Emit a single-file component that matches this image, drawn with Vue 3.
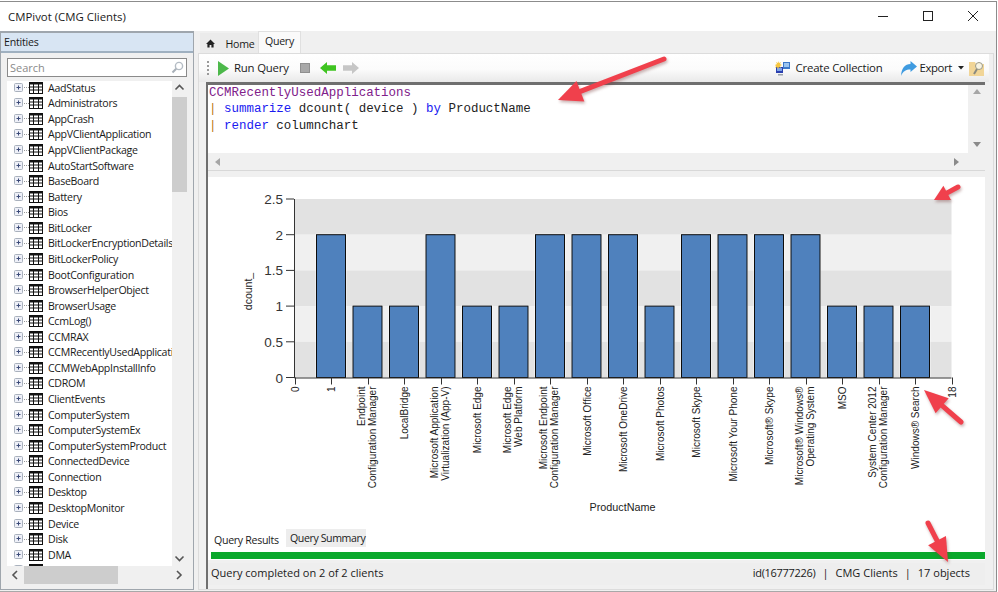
<script setup>
const entities = ['AadStatus','Administrators','AppCrash','AppVClientApplication','AppVClientPackage','AutoStartSoftware','BaseBoard','Battery','Bios','BitLocker','BitLockerEncryptionDetails','BitLockerPolicy','BootConfiguration','BrowserHelperObject','BrowserUsage','CcmLog()','CCMRAX','CCMRecentlyUsedApplications','CCMWebAppInstallInfo','CDROM','ClientEvents','ComputerSystem','ComputerSystemEx','ComputerSystemProduct','ConnectedDevice','Connection','Desktop','DesktopMonitor','Device','Disk','DMA','DMAChannel']

const x0 = 294.5, step = 36.5, yBase = 378, yUnit = 71.4
const products = [
  { v: 2, l: ['1'] },
  { v: 1, l: ['Endpoint', 'Configuration Manager'] },
  { v: 1, l: ['LocalBridge'] },
  { v: 2, l: ['Microsoft Application', 'Virtualization (App-V)'] },
  { v: 1, l: ['Microsoft Edge'] },
  { v: 1, l: ['Microsoft Edge', 'Web Platform'] },
  { v: 2, l: ['Microsoft Endpoint', 'Configuration Manager'] },
  { v: 2, l: ['Microsoft Office'] },
  { v: 2, l: ['Microsoft OneDrive'] },
  { v: 1, l: ['Microsoft Photos'] },
  { v: 2, l: ['Microsoft Skype'] },
  { v: 2, l: ['Microsoft Your Phone'] },
  { v: 2, l: ['Microsoft® Skype'] },
  { v: 2, l: ['Microsoft® Windows®', 'Operating System'] },
  { v: 1, l: ['MSO'] },
  { v: 1, l: ['System Center 2012', 'Configuration Manager'] },
  { v: 1, l: ['Windows® Search'] }
]
const bars = products.map((p, i) => {
  const cx = x0 + step * (i + 1)
  return {
    cx,
    x: cx - 14.5,
    y: yBase - p.v * yUnit,
    h: p.v * yUnit,
    lines: p.l.map((t, k) => ({
      t,
      bx: p.l.length === 1 ? cx + 4 : cx - 3 + k * 11
    }))
  }
})
const bands = [0, 1, 2, 3, 4].map(i => ({ y: 199.5 + i * 35.7, fill: i % 2 ? '#f0f0f0' : '#e2e2e2' }))
const yTicks = [
  { t: '2.5', y: 199.5 }, { t: '2', y: 235.2 }, { t: '1.5', y: 270.9 },
  { t: '1', y: 306.6 }, { t: '0.5', y: 342.3 }, { t: '0', y: 378 }
]
const xTicks = Array.from({ length: 19 }, (_, i) => x0 + i * step)

const arrows = [
  [664, 59, 558, 100, 24, 11],
  [958, 187, 934, 200, 15, 8],
  [961, 422, 924, 390, 24, 10],
  [928, 523, 948, 562, 24, 10]
].map(([x1, y1, x2, y2, hl, hw]) => {
  const d = Math.hypot(x2 - x1, y2 - y1)
  const ux = (x2 - x1) / d, uy = (y2 - y1) / d
  const bx = x2 - ux * hl, by = y2 - uy * hl
  return {
    x1, y1, x2: bx, y2: by,
    head: `${x2},${y2} ${bx - uy * hw},${by + ux * hw} ${bx + uy * hw},${by - ux * hw}`
  }
})
</script>

<template>
  <div class="window">
    <header class="titlebar">
      <span class="title">CMPivot (CMG Clients)</span>
      <div class="controls">
        <svg width="12" height="12" viewBox="0 0 12 12"><path d="M1 6.5h10" stroke="#222" stroke-width="1" /></svg>
        <svg width="12" height="12" viewBox="0 0 12 12"><rect x="1.5" y="1.5" width="9" height="9" fill="none" stroke="#222" stroke-width="1" /></svg>
        <svg width="12" height="12" viewBox="0 0 12 12"><path d="M1 1l10 10M11 1L1 11" stroke="#222" stroke-width="1" /></svg>
      </div>
    </header>

    <main class="body">
      <aside class="left">
        <div class="left-head">Entities</div>
        <div class="search">
          <span>Search</span>
          <svg width="13" height="13" viewBox="0 0 13 13"><circle cx="8" cy="5" r="3.6" fill="#fff" stroke="#b4bcc4" stroke-width="1.4" /><path d="M5.2 7.8L1.5 11.5" stroke="#a8b0b8" stroke-width="2" /></svg>
        </div>
        <div class="tree-wrap">
          <div class="tree-main">
            <ul class="tree">
              <li v-for="e in entities" :key="e" class="row">
                <svg class="exp" width="10" height="10" viewBox="0 0 10 10"><rect x=".5" y=".5" width="8" height="8" rx="1" fill="#eef0f8" stroke="#a9b1bd" /><path d="M2.5 4.5h4M4.5 2.5v4" stroke="#3b4a78" /></svg>
                <span class="dots"></span>
                <svg class="tbl" width="14" height="12" viewBox="0 0 14 12"><rect x=".5" y=".5" width="13" height="11" fill="#fff" stroke="#111" /><path d="M0 1.5h14" stroke="#111" stroke-width="2" /><path d="M0 5h14M0 8h14M4.5 0v12M9.5 0v12" stroke="#111" /></svg>
                <span class="name">{{ e }}</span>
              </li>
            </ul>
            <div class="vscroll">
              <svg class="chev" width="15" height="16" viewBox="0 0 15 16"><path d="M3.5 8.5l4-4 4 4" fill="none" stroke="#555" stroke-width="1.6" /></svg>
              <div class="vthumb"></div>
              <svg class="chev end" width="15" height="15" viewBox="0 0 15 15"><path d="M3.5 5.5l4 4 4-4" fill="none" stroke="#555" stroke-width="1.6" /></svg>
            </div>
          </div>
          <div class="hscroll">
            <svg width="17" height="18" viewBox="0 0 17 18"><path d="M10 5l-4 4 4 4" fill="none" stroke="#555" stroke-width="1.6" /></svg>
            <div class="hthumb"></div>
            <svg class="hright" width="17" height="18" viewBox="0 0 17 18"><path d="M7 5l4 4-4 4" fill="none" stroke="#555" stroke-width="1.6" /></svg>
          </div>
        </div>
      </aside>

      <section class="right">
        <nav class="tabs">
          <div class="tab home">
            <svg width="9" height="9" viewBox="0 0 9 9"><path d="M4.5 .5L9 5H7.6v3.6H5.4V6H3.6v2.6H1.4V5H0z" fill="#222" /></svg>
            <span>Home</span>
          </div>
          <div class="tab active">Query</div>
        </nav>
        <div class="pane">
          <div class="toolbar">
            <span class="grip"></span>
            <svg class="play" width="11" height="15" viewBox="0 0 11 15"><path d="M0 0l11 7.500L0 15z" fill="#4cb84a" /></svg>
            <span class="tool-text">Run Query</span>
            <span class="stop"></span>
            <svg class="arrow-l" width="16" height="12" viewBox="0 0 16 12"><path d="M0 6l7-6v3.200h9v5.600H7V12z" fill="#3fc421" /></svg>
            <svg class="arrow-r" width="16" height="12" viewBox="0 0 16 12"><path d="M16 6L9 0v3.200H0v5.600h9V12z" fill="#c6c6c6" /></svg>
            <span class="spacer"></span>
            <svg class="coll" width="16" height="16" viewBox="0 0 16 16"><rect x="1" y="7" width="7" height="6" fill="#2a3fb0" /><rect x="8" y="2" width="7" height="7" fill="#3d78c8" /><rect x="9" y="3" width="5" height="4" fill="#9cc4ee" /><rect x="2" y="8" width="5" height="3" fill="#7ea4e6" /><path d="M3 1l1 2 2-1-1 2 2 1-2 1 1 2-2-1-1 2-1-2-2 1 1-2-1-1 2-1-1-2 2 1z" fill="#f7c63e" /><path d="M3 14h5v1.500H3z" fill="#9aa3ad" /></svg>
            <span class="tool-text">Create Collection</span>
            <svg class="exp-ic" width="16" height="15" viewBox="0 0 16 15"><path d="M16 5.500L9.500 0v3C4 3 .5 7 0 15c2-5 5-6.500 9.500-6.500V11z" fill="#3f9be0" /></svg>
            <span class="tool-text export">Export</span>
            <svg class="caret" width="6" height="4" viewBox="0 0 6 4"><path d="M0 0h6L3 3.500z" fill="#222" /></svg>
            <svg class="find" width="16" height="17" viewBox="0 0 16 17"><path d="M0 2h6l1 2h8v12H0z" fill="#f1d597" /><circle cx="10" cy="6" r="3.500" fill="#f7f3e2" stroke="#9a9a8a" /><path d="M8 9l-3 5" stroke="#8a8a80" stroke-width="2" /></svg>
          </div>

          <div class="work">
            <div class="editor">
              <div class="code-main">
                <div class="code">
                  <div class="ln"><span class="tbl-name">CCMRecentlyUsedApplications</span></div>
                  <div class="ln"><span class="pipe">|</span> <span class="kw">summarize</span> dcount( device ) <span class="kw">by</span> ProductName</div>
                  <div class="ln"><span class="pipe">|</span> <span class="kw">render</span> columnchart</div>
                </div>
                <div class="code-hs">
                  <svg width="6" height="8" viewBox="0 0 6 8"><path d="M5 0v8L0 4z" fill="#a6a6a6" /></svg>
                  <svg width="6" height="8" viewBox="0 0 6 8"><path d="M0 0v8l5-4z" fill="#8a8a8a" /></svg>
                </div>
              </div>
              <div class="code-vs">
                <svg width="8" height="6" viewBox="0 0 8 6"><path d="M0 5h8L4 0z" fill="#a6a6a6" /></svg>
                <svg width="8" height="6" viewBox="0 0 8 6"><path d="M0 0h8L4 5z" fill="#8a8a8a" /></svg>
              </div>
            </div>

            <div class="chart">
              <svg class="chart-svg" width="779" height="351" viewBox="206 177.500 779 351">
                <rect v-for="b in bands" :key="b.y" x="294.5" :y="b.y" width="657" height="35.7" :fill="b.fill" />
                <g v-for="b in bars" :key="b.cx">
                  <rect :x="b.x - 1" :y="b.y - 1" width="31" :height="b.h + 1" fill="#fff" opacity=".7" />
                  <rect :x="b.x" :y="b.y" width="29" :height="b.h" fill="#4f81bd" stroke="#0c0c0c" stroke-width="1" />
                </g>
                <path d="M294.500 199.500V378.500H951.500" fill="none" stroke="#333" stroke-width="1" />
                <path v-for="t in yTicks" :key="t.t" :d="`M286 ${t.y}h8`" stroke="#333" stroke-width="1" />
                <path v-for="x in xTicks" :key="x" :d="`M${Math.round(x) + .5} 378v7`" stroke="#333" stroke-width="1" />
                <text v-for="t in yTicks" :key="'y' + t.t" class="ytick" x="283" :y="t.y + 5" text-anchor="end">{{ t.t }}</text>
                <text class="ylab" transform="translate(251.500 292) rotate(-90)" text-anchor="middle">dcount_</text>
                <text class="xlab" transform="translate(298.500 387) rotate(-90)" text-anchor="end">0</text>
                <template v-for="b in bars" :key="'l' + b.cx">
                  <text v-for="l in b.lines" :key="l.t" class="xlab" :transform="`translate(${l.bx} 387) rotate(-90)`" text-anchor="end">{{ l.t }}</text>
                </template>
                <text class="xlab" transform="translate(955.500 387) rotate(-90)" text-anchor="end">18</text>
                <text class="axis" x="622.500" y="511" text-anchor="middle">ProductName</text>
              </svg>
            </div>

            <div class="subtabs">
              <div class="subtab on">Query Results</div>
              <div class="subtab">Query Summary</div>
            </div>
            <div class="progress"><div class="fill"></div></div>
            <footer class="status">
              <span class="status-l">Query completed on 2 of 2 clients</span>
              <span class="status-r"><span class="sid">id(16777226)</span><span>|</span><span>CMG Clients</span><span>|</span><span>17 objects</span></span>
            </footer>
          </div>
        </div>
      </section>
    </main>

    <svg class="overlay" width="998" height="592" viewBox="0 0 998 592">
      <g v-for="a in arrows" :key="a.x1" class="red-arrow">
        <line :x1="a.x1" :y1="a.y1" :x2="a.x2" :y2="a.y2" stroke="#f0404c" stroke-width="5" stroke-linecap="round" />
        <polygon :points="a.head" fill="#f0404c" />
      </g>
    </svg>
  </div>
</template>

<style scoped>
* { box-sizing: border-box; }
.window {
  position: relative;
  width: 997px;
  height: 591px;
  margin-top: 1px;
  border-top: 1px solid #8c8c8c;
  border-right: 1px solid #8c8c8c;
  border-bottom: 1px solid #a8a8a8;
  background: #f0f0f0;
  display: flex;
  flex-direction: column;
  font-family: "Open Sans", "Noto Sans", sans-serif;
  color: #1a1a1a;
  overflow: hidden;
}
.titlebar {
  height: 29px;
  flex: none;
  background: #fff;
  display: flex;
  align-items: center;
  justify-content: space-between;
  padding-left: 8px;
}
.title { font-size: 11.4px; }
.controls {
  display: flex;
  gap: 33px;
  padding-right: 17px;
  margin-top: -1px;
}
.body { flex: 1; display: flex; min-height: 0; }
.left {
  width: 194px;
  flex: none;
  display: flex;
  flex-direction: column;
  border: 1px solid #9fa6ad;
  border-top-width: 2px;
  border-left-width: 1px;
  background: #f0f0f0;
  margin-bottom: 1px;
}
.left-head {
  height: 20px;
  background: #d8e5f3;
  border-bottom: 2px solid #9fb0c0;
  font-size: 10.6px;
  line-height: 18px;
  padding-left: 3px;
  letter-spacing: -.2px;
}
.search {
  margin: 5px 6px 0;
  height: 19px;
  border: 1px solid #8a8a8a;
  background: #fff;
  display: flex;
  align-items: center;
  justify-content: space-between;
  padding: 0 2px 0 2px;
  font-size: 11px;
  color: #8a8a8a;
}
.tree-wrap {
  margin: 4px 6px 5px;
  flex: 1;
  min-height: 0;
  display: flex;
  flex-direction: column;
}
.tree-main { flex: 1; min-height: 0; display: flex; }
.tree {
  flex: 1;
  min-width: 0;
  margin: 0;
  padding: 0;
  list-style: none;
  background: #fff;
  overflow: hidden;
}
.row {
  height: 15.57px;
  display: flex;
  align-items: center;
  white-space: nowrap;
  padding-left: 7px;
  font-size: 10.6px;
}
.row:first-child { margin-top: -1px; }
.exp { flex: none; background: #fff; }
.dots {
  flex: none;
  width: 5px;
  border-top: 1px dotted #999;
}
.tbl { flex: none; }
.name { margin-left: 5px; letter-spacing: -.3px; }
.vscroll {
  width: 15px;
  flex: none;
  background: #f0f0f0;
  display: flex;
  flex-direction: column;
}
.chev { flex: none; }
.vthumb { height: 95px; background: #cdcdcd; flex: none; }
.chev.end { margin-top: auto; }
.hscroll {
  height: 18px;
  flex: none;
  display: flex;
  align-items: stretch;
  background: #f0f0f0;
}
.hthumb { width: 94px; background: #cdcdcd; }
.hright { margin-left: auto; }
.right {
  flex: 1;
  min-width: 0;
  margin-left: 4px;
  display: flex;
  flex-direction: column;
}
.tabs {
  height: 22px;
  flex: none;
  display: flex;
  align-items: flex-end;
  padding-left: 2px;
  position: relative;
  z-index: 1;
}
.tab { font-size: 10.6px; display: flex; align-items: center; justify-content: center; }
.tab.home { width: 58px; height: 20px; background: #ebebeb; padding: 1px 0 0 3px; gap: 10px; letter-spacing: -.2px; }
.tab.active {
  width: 43px;
  height: 22px;
  background: #fafafa;
  border: 1px solid #e0e0e0;
  border-bottom: 0;
  padding-bottom: 3px;
  letter-spacing: -.3px;
}
.pane {
  flex: 1;
  min-height: 0;
  margin-right: 2px;
  margin-bottom: 1px;
  border: 1px solid #dcdcdc;
  background: #f0f0f0;
  display: flex;
  flex-direction: column;
}
.toolbar {
  height: 28px;
  flex: none;
  margin-right: 4px;
  display: flex;
  align-items: center;
  padding-left: 8px;
  background: linear-gradient(#ffffff, #fbfbfb 55%, #e9e9e9);
}
.grip {
  width: 2px;
  height: 15px;
  background: repeating-linear-gradient(#9a9a9a 0 2px, transparent 2px 4px);
}
.play { margin-left: 9px; }
.tool-text { font-size: 11.4px; margin: 0 0 2px 5px; white-space: nowrap; letter-spacing: -.2px; }
.tool-text.export { margin-left: 3px; letter-spacing: -.4px; }
.stop { width: 10px; height: 10px; margin-left: 11px; background: #a8a8a8; border: 1px solid #8f8f8f; }
.arrow-l { margin-left: 10px; }
.arrow-r { margin-left: 7px; }
.spacer { flex: 1; }
.coll { flex: none; }
.exp-ic { margin-left: 18px; flex: none; }
.caret { margin-left: 6px; flex: none; }
.find { margin-left: 5px; margin-right: 4px; flex: none; }
.work {
  flex: 1;
  min-height: 0;
  margin-left: 7px;
  width: 779px;
  display: flex;
  flex-direction: column;
  border-left: 2px solid #6f6f6f;
}
.editor {
  height: 89px;
  flex: none;
  display: flex;
  background: #fff;
  border-top: 3px solid #6f6f6f;
  border-bottom: 1px solid #d8d8d8;
}
.code-main { flex: 1; min-width: 0; display: flex; flex-direction: column; padding-left: 1px; }
.code {
  flex: 1;
  font-family: "Liberation Mono", monospace;
  font-size: 12.47px;
  line-height: 16.4px;
  color: #222;
  white-space: pre;
}
.tbl-name { color: #80208a; }
.kw { color: #1a1af0; }
.pipe { color: #c07a20; }
.code-hs {
  height: 17px;
  flex: none;
  margin-left: -1px;
  background: #f0f0f0;
  display: flex;
  align-items: center;
  justify-content: space-between;
  padding: 0 8px 0 7px;
}
.code-vs {
  width: 17px;
  flex: none;
  background: #f0f0f0;
  display: flex;
  flex-direction: column;
  justify-content: space-between;
  align-items: center;
  padding: 4px 0 22px;
}
.chart {
  margin-top: 6px;
  height: 351px;
  flex: none;
  background: #fff;
  overflow: hidden;
}
.chart-svg { display: block; margin-left: -2px; }
.ytick { font-family: "Liberation Sans", sans-serif; font-size: 13.5px; fill: #333; }
.axis { font-family: "Liberation Sans", sans-serif; font-size: 10.8px; fill: #222; }
.ylab { font-family: "Liberation Sans", sans-serif; font-size: 10.5px; fill: #222; }
.xlab { font-family: "Liberation Sans", sans-serif; font-size: 10px; fill: #222; }
.subtabs {
  height: 24px;
  flex: none;
  background: #fff;
  display: flex;
  align-items: flex-start;
  font-size: 10.6px;
  letter-spacing: -.3px;
}
.subtab {
  height: 18px;
  margin-top: 1px;
  padding: 0 4px;
  width: 80px;
  background: #ededed;
  line-height: 18px;
  white-space: nowrap;
  letter-spacing: -.4px;
}
.subtab.on {
  width: 78px;
  height: 21px;
  margin-top: 0;
  background: #fff;
  line-height: 24px;
  padding: 0 0 0 6px;
  letter-spacing: -.3px;
}
.progress {
  height: 9px;
  flex: none;
  padding: 1px 0 0 3px;
  background: #fff;
  margin-top: -1px;
}
.fill { height: 7px; background: #0aa82c; }
.status {
  height: 22px;
  flex: none;
  margin-top: 3px;
  display: flex;
  align-items: center;
  justify-content: space-between;
  padding: 0 15px 3px 3px;
  font-size: 11px;
  background: #eeeeee;
}
.status-r { white-space: nowrap; display: flex; gap: 7px; }
.sid { letter-spacing: -.3px; }
.overlay { position: absolute; left: 0; top: -2px; pointer-events: none; }
.red-arrow { filter: drop-shadow(1px 2px 1.5px rgba(120, 60, 60, .4)); }
</style>
